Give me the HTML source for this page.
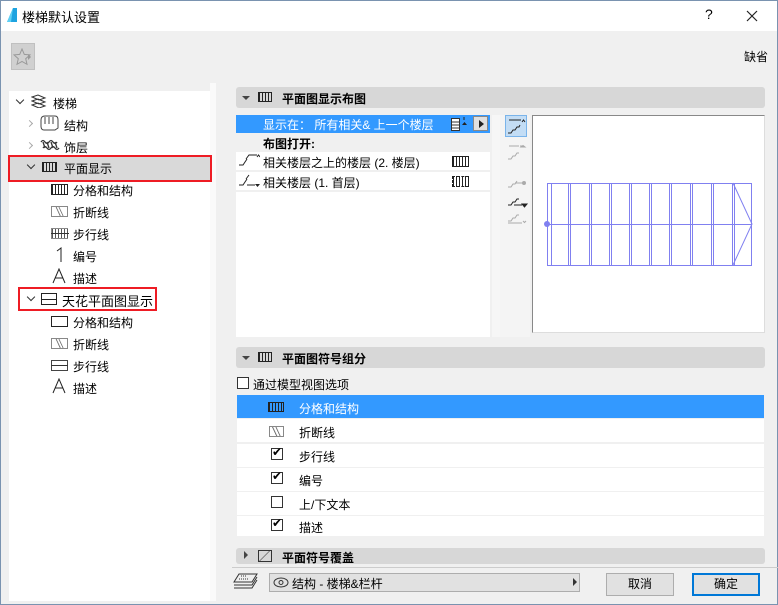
<!DOCTYPE html>
<html><head><meta charset="utf-8"><style>
*{box-sizing:border-box;margin:0;padding:0}
body{width:778px;height:605px;overflow:hidden;background:#f0f0f0;font-family:"Liberation Sans","Noto Sans CJK SC",sans-serif;font-size:12px;color:#000;position:relative}
.a{position:absolute}
.win{position:absolute;left:0;top:0;width:778px;height:605px;border:1px solid #7a93b0}
.t{white-space:nowrap}
.hdr{position:absolute;background:#d7d7d7;border-radius:3px;font-weight:bold}
.row{position:absolute;left:237px;width:527px;height:23px;background:#fff}
.cb{position:absolute;width:12px;height:12px;border:1px solid #333;background:#fff}
.btn{position:absolute;height:23px;border:1px solid #adadad;background:#e1e1e1;text-align:center;line-height:21px}
.chev{position:absolute;width:6px;height:6px;border-right:1.5px solid #333;border-bottom:1.5px solid #333;transform:rotate(45deg)}
.chr{position:absolute;width:5px;height:5px;border-right:1.5px solid #aaa;border-bottom:1.5px solid #aaa;transform:rotate(-45deg)}
</style></head><body>
<div class="win"></div>
<!-- title -->
<div class="a" style="left:1px;top:1px;width:776px;height:30px;background:#fff"></div>
<svg class="a" style="left:6px;top:7px" width="12" height="16"><path d="M1 15 L7 1 L11 1 L11 15 Z" fill="#1ea3e0"/><path d="M1 15 L7 1 L5 15Z" fill="#5fd0f5"/></svg>
<div class="a t" style="left:22px;top:7px;font-size:13px">楼梯默认设置</div>
<div class="a t" style="left:705px;top:6px;font-size:14px">?</div>
<svg class="a" style="left:746px;top:10px" width="12" height="12"><path d="M1 1L11 11M11 1L1 11" stroke="#222" stroke-width="1.2"/></svg>
<!-- fav -->
<div class="a" style="left:11px;top:43px;width:24px;height:27px;background:#d0d0d0;border:1px solid #c0c0c0"></div>
<svg class="a" style="left:13px;top:48px" width="18" height="18"><path d="M9 1l2.3 5.4 5.7.5-4.3 3.8 1.3 5.6L9 13.4 4 16.3l1.3-5.6L1 6.9l5.7-.5z" fill="none" stroke="#999"/></svg>
<div class="a" style="left:28px;top:54px;width:0;height:0;border-left:3px solid #999;border-top:3px solid transparent;border-bottom:3px solid transparent"></div>
<div class="a t" style="left:744px;top:48px">缺省</div>
<!-- tree -->
<div class="a" style="left:9px;top:91px;width:201px;height:510px;background:#fff"></div>
<div class="a" style="left:210px;top:83px;width:6px;height:518px;background:#fafafa"></div>
<div class="chev" style="left:17px;top:97px"></div>
<svg class="a" style="left:31px;top:94px" width="16" height="14"><g fill="none" stroke="#333"><path d="M1 3l6-2 7 3-6 2z M1 7l6-2 7 3-6 2z M1 11l6-2 7 3-6 2z"/></g></svg>
<div class="a t" style="left:53px;top:95px">楼梯</div>
<div class="chr" style="left:27px;top:121px"></div>
<svg class="a" style="left:39px;top:114px" width="20" height="18"><g fill="none" stroke="#444"><path d="M2 6q0-4 4-4h10q3 0 3 4v8l-3 2H5q-3 0-3-4z"/><path d="M6 3v7M10 3v7M14 3v7"/></g></svg>
<div class="a t" style="left:64px;top:117px">结构</div>
<div class="chr" style="left:27px;top:143px"></div>
<svg class="a" style="left:40px;top:137px" width="20" height="16"><g fill="none" stroke="#333" stroke-width="1.3"><path d="M1 5q2-3 4 0t4 0 4 0 4 0"/><path d="M3 11q2-3 4 0t4 0 4 0 4 0"/><path d="M3 5l2 6M7 5l2 6M11 5l2 6M15 5l2 6"/></g></svg>
<div class="a t" style="left:64px;top:139px">饰层</div>
<div class="a" style="left:8px;top:155px;width:204px;height:27px;background:#d9d9d9;border:2px solid #ee1c24"></div>
<div class="chev" style="left:28px;top:162px"></div>
<div class="a" style="left:42px;top:162px;width:15px;height:10px;border:1px solid #222;background:repeating-linear-gradient(90deg,#222 0 1px,transparent 1px 3px)"></div>
<div class="a t" style="left:64px;top:160px">平面显示</div>
<div class="a" style="left:51px;top:184px;width:17px;height:11px;border:1px solid #222;background:repeating-linear-gradient(90deg,#222 0 1px,transparent 1px 3px)"></div>
<div class="a t" style="left:73px;top:182px">分格和结构</div>
<div class="a" style="left:51px;top:206px;width:17px;height:11px;border:1px solid #888;background:linear-gradient(65deg,transparent 40%,#444 42%,transparent 48%,transparent 55%,#444 57%,transparent 62%)"></div>
<div class="a t" style="left:73px;top:204px">折断线</div>
<div class="a" style="left:51px;top:228px;width:17px;height:11px;border:1px solid #888;border-right:none;background:repeating-linear-gradient(90deg,#555 0 1px,transparent 1px 3px)"></div>
<div class="a" style="left:51px;top:233px;width:18px;height:1px;background:#333"></div>
<div class="a t" style="left:73px;top:226px">步行线</div>
<svg class="a" style="left:55px;top:247px" width="10" height="16"><path d="M2 4l4-3v14" fill="none" stroke="#222"/></svg>
<div class="a t" style="left:73px;top:248px">编号</div>
<svg class="a" style="left:52px;top:268px" width="14" height="16"><path d="M1 15L7 1l6 14M3.5 10h7" fill="none" stroke="#222"/></svg>
<div class="a t" style="left:73px;top:270px">描述</div>
<div class="a" style="left:18px;top:287px;width:139px;height:24px;border:2px solid #ee1c24"></div>
<div class="chev" style="left:28px;top:294px"></div>
<div class="a" style="left:41px;top:293px;width:16px;height:12px;border:1px solid #222"></div>
<div class="a" style="left:41px;top:299px;width:16px;height:1px;background:#222"></div>
<div class="a t" style="left:62px;top:291px;font-size:13px">天花平面图显示</div>
<div class="a" style="left:51px;top:316px;width:17px;height:11px;border:1px solid #222"></div>
<div class="a t" style="left:73px;top:314px">分格和结构</div>
<div class="a" style="left:51px;top:338px;width:17px;height:11px;border:1px solid #888;background:linear-gradient(65deg,transparent 40%,#444 42%,transparent 48%,transparent 55%,#444 57%,transparent 62%)"></div>
<div class="a t" style="left:73px;top:336px">折断线</div>
<div class="a" style="left:51px;top:360px;width:17px;height:11px;border:1px solid #444"></div>
<div class="a" style="left:51px;top:365px;width:17px;height:1px;background:#333"></div>
<div class="a t" style="left:73px;top:358px">步行线</div>
<svg class="a" style="left:52px;top:378px" width="14" height="16"><path d="M1 15L7 1l6 14M3.5 10h7" fill="none" stroke="#222"/></svg>
<div class="a t" style="left:73px;top:380px">描述</div>
<!-- section 1 -->
<div class="hdr" style="left:236px;top:87px;width:529px;height:21px"></div>
<div class="a" style="left:242px;top:96px;border-left:4px solid transparent;border-right:4px solid transparent;border-top:4px solid #444"></div>
<div class="a" style="left:258px;top:92px;width:14px;height:10px;border:1px solid #222;background:repeating-linear-gradient(90deg,#222 0 1px,transparent 1px 3px)"></div>
<div class="a t" style="left:282px;top:90px;font-weight:bold">平面图显示布图</div>
<div class="a" style="left:236px;top:115px;width:254px;height:222px;background:#fff"></div>
<div class="a" style="left:236px;top:115px;width:254px;height:18px;background:#3399ff"></div>
<div class="a t" style="left:263px;top:116px;color:#fff">显示在： 所有相关&amp; 上一个楼层</div>
<svg class="a" style="left:451px;top:116px" width="18" height="16"><rect x="0.5" y="2.5" width="8" height="12" fill="#fff" stroke="#333"/><path d="M1 6h7M1 9h7M1 12h7" stroke="#333"/><path d="M11 9l2.5-3 2.5 3z" fill="#222"/><path d="M13 1v3" stroke="#222"/></svg>
<div class="a" style="left:473px;top:116px;width:15px;height:15px;background:#e0e0e0;border:1px solid #888"></div>
<div class="a" style="left:479px;top:120px;border-left:5px solid #222;border-top:4px solid transparent;border-bottom:4px solid transparent"></div>
<div class="a" style="left:236px;top:133px;width:254px;height:19px;background:#f0f0f0"></div>
<div class="a t" style="left:263px;top:135px;font-weight:bold">布图打开:</div>
<div class="a" style="left:236px;top:170px;width:254px;height:2px;background:#f0f0f0"></div>
<div class="a" style="left:236px;top:190px;width:254px;height:2px;background:#f0f0f0"></div>
<svg class="a" style="left:238px;top:153px" width="22" height="16"><path d="M1 12h4l4-6 M8 6l3-4h8" fill="none" stroke="#222"/><path d="M19 4l1.5-2l1.5 2" fill="none" stroke="#222"/></svg>
<div class="a t" style="left:263px;top:154px">相关楼层之上的楼层 (2. 楼层)</div>
<div class="a" style="left:452px;top:156px;width:17px;height:11px;border:1px solid #222;background:repeating-linear-gradient(90deg,#222 0 1px,transparent 1px 3px)"></div>
<svg class="a" style="left:238px;top:173px" width="22" height="16"><path d="M1 12h4l4-6 M8 6l3-4 M9 12h8" fill="none" stroke="#222"/><path d="M17 11h5l-2.5 3z" fill="#222"/></svg>
<div class="a t" style="left:263px;top:174px">相关楼层 (1. 首层)</div>
<div class="a" style="left:452px;top:176px;width:17px;height:11px;border:1px dashed #222;background:repeating-linear-gradient(90deg,#222 0 1px,transparent 1px 3px)"></div>
<!-- toolbar -->
<div class="a" style="left:492px;top:115px;width:8px;height:222px;background:#f6f6f6"></div>
<div class="a" style="left:500px;top:115px;width:30px;height:222px;background:#f4f4f4"></div>
<div class="a" style="left:505px;top:115px;width:22px;height:22px;background:#c3ddf5;border:1px solid #7ab4ea"></div>
<svg class="a" style="left:505px;top:115px" width="24" height="120"><g fill="none" stroke="#222"><path d="M3 18h3l2-3h2l2-3h2l1-2M4 5h12"/><path d="M17 7l1.5-2 1.5 2"/></g><g fill="none" stroke="#aaa"><path d="M3 44h3l2-3h2l2-3h2 M4 31h10 M15 31h2"/><path d="M16 32l2-1.5 2 1.5z" fill="#aaa"/><path d="M3 72h3l2-3h2l2-3 M10 68h10"/><circle cx="19" cy="68" r="1.5" fill="#aaa"/><path d="M3 106h3l2-3h2l2-3h2 M3 108h14 M18 106l1.5 1.5 1.5-1.5"/></g><g fill="none" stroke="#222"><path d="M3 90h3l2-3h2l2-3h2 M9 90h8"/><path d="M17 89h5l-2.5 3z" fill="#222"/></g></svg>
<!-- preview -->
<div class="a" style="left:532px;top:115px;width:233px;height:218px;background:#fff;border:1px solid #888;border-right-color:#ddd;border-bottom-color:#ddd"></div>
<svg class="a" style="left:532px;top:115px" width="233" height="218"><g fill="none" stroke="#8080f0" stroke-width="1"><rect x="15.5" y="68.5" width="204" height="82"/><path d="M15 109.5h205"/><path d="M19.5 68v82M36.5 68v82M38.5 68v82M57.5 68v82M59.5 68v82M77.5 68v82M79.5 68v82M97.5 68v82M99.5 68v82M117.5 68v82M119.5 68v82M137.5 68v82M139.5 68v82M158.5 68v82M160.5 68v82M179.5 68v82M181.5 68v82M200.5 68v82M202.5 68v82"/><path d="M201 68l19 41-19 41"/></g><circle cx="15" cy="109" r="3" fill="#8080f0"/></svg>
<!-- section 2 -->
<div class="hdr" style="left:236px;top:347px;width:529px;height:21px"></div>
<div class="a" style="left:242px;top:356px;border-left:4px solid transparent;border-right:4px solid transparent;border-top:4px solid #444"></div>
<div class="a" style="left:258px;top:352px;width:14px;height:10px;border:1px solid #222;background:repeating-linear-gradient(90deg,#222 0 1px,transparent 1px 3px)"></div>
<div class="a t" style="left:282px;top:350px;font-weight:bold">平面图符号组分</div>
<div class="cb" style="left:237px;top:377px"></div>
<div class="a t" style="left:253px;top:376px">通过模型视图选项</div>
<div class="row" style="top:395px;background:#3399ff"></div>
<div class="a" style="left:268px;top:402px;width:16px;height:10px;border:1px solid #222;background:repeating-linear-gradient(90deg,#222 0 1px,transparent 1px 3px)"></div>
<div class="a t" style="left:299px;top:400px;color:#fff">分格和结构</div>
<div class="row" style="top:419px"></div>
<div class="a" style="left:269px;top:426px;width:15px;height:11px;border:1px solid #888;background:linear-gradient(65deg,transparent 35%,#444 38%,transparent 45%,transparent 55%,#444 58%,transparent 64%)"></div>
<div class="a t" style="left:299px;top:424px">折断线</div>
<div class="row" style="top:444px"></div>
<div class="cb" style="left:271px;top:448px"></div><div class="a t" style="left:272px;top:445px;font-size:12px">✔</div>
<div class="a t" style="left:299px;top:448px">步行线</div>
<div class="row" style="top:468px"></div>
<div class="cb" style="left:271px;top:472px"></div><div class="a t" style="left:272px;top:469px;font-size:12px">✔</div>
<div class="a t" style="left:299px;top:472px">编号</div>
<div class="row" style="top:492px"></div>
<div class="cb" style="left:271px;top:496px"></div>
<div class="a t" style="left:299px;top:496px">上/下文本</div>
<div class="row" style="top:516px;height:20px"></div>
<div class="cb" style="left:271px;top:519px"></div><div class="a t" style="left:272px;top:516px;font-size:12px">✔</div>
<div class="a t" style="left:299px;top:519px">描述</div>
<!-- section 3 -->
<div class="hdr" style="left:236px;top:548px;width:529px;height:16px"></div>
<div class="a" style="left:244px;top:551px;border-top:4px solid transparent;border-bottom:4px solid transparent;border-left:4px solid #444"></div>
<div class="a" style="left:258px;top:550px;width:14px;height:12px;border:1px solid #333;background:linear-gradient(135deg,transparent 45%,#333 47%,transparent 52%)"></div>
<div class="a t" style="left:282px;top:549px;font-weight:bold">平面符号覆盖</div>
<div class="a" style="left:232px;top:567px;width:546px;height:1px;background:#ccc"></div>
<!-- bottom -->
<svg class="a" style="left:233px;top:572px" width="26" height="20"><g fill="none" stroke="#333"><path d="M6 2h18l-5 8H1z"/><path d="M1 13h18l5-8M1 16h18l5-8"/><path d="M8 4l6 0M6 7h10" stroke-dasharray="1 1"/></g></svg>
<div class="a" style="left:269px;top:573px;width:311px;height:19px;background:#e1e1e1;border:1px solid #adadad"></div>
<svg class="a" style="left:273px;top:577px" width="16" height="11"><ellipse cx="8" cy="5.5" rx="7" ry="4.5" fill="none" stroke="#333"/><circle cx="8" cy="5.5" r="2" fill="none" stroke="#333"/></svg>
<div class="a t" style="left:292px;top:575px">结构 - 楼梯&amp;栏杆</div>
<div class="a" style="left:573px;top:578px;border-left:4px solid #333;border-top:4px solid transparent;border-bottom:4px solid transparent"></div>
<div class="btn" style="left:606px;top:573px;width:68px">取消</div>
<div class="btn" style="left:692px;top:573px;width:68px;border:2px solid #0078d7;line-height:19px">确定</div>
</body></html>
